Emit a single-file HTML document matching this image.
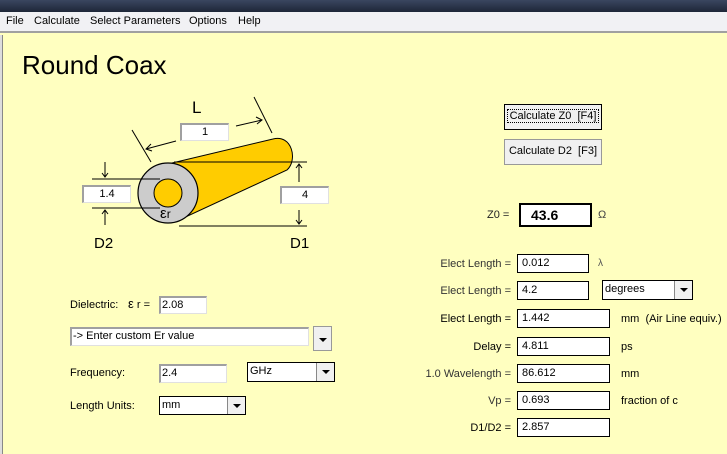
<!DOCTYPE html>
<html><head><style>
*{margin:0;padding:0;box-sizing:border-box}
body{width:727px;height:454px;overflow:hidden;background:#ffffc0;font-family:"Liberation Sans",sans-serif;font-size:11px;color:#000;position:relative}
.a{position:absolute;white-space:nowrap}
.tb{left:0;top:0;width:727px;height:12px;background:linear-gradient(#3a4660,#1e2638)}
.mb{left:0;top:12px;width:727px;height:21px;background:#f1f1f4;border-bottom:2px solid #a0a0a0}
.mb span{position:absolute;top:3px;font-size:11px;white-space:nowrap}
.box{position:absolute;background:#fff;border:1px solid #000;padding:1px 4px;font-size:11px;line-height:14px}
.sunk{position:absolute;background:#fff;border-top:2px solid #a0a0a0;border-left:2px solid #a0a0a0;border-bottom:1px solid #e0e0e0;border-right:1px solid #e0e0e0;font-size:11px;text-align:center;line-height:15px}
.cmb{position:absolute;background:#fff;border:1px solid #000;font-size:11px;padding:1px 2px;line-height:15px}
.dd{position:absolute;right:0;top:0;width:18px;height:100%;background:#f0f0f0;border-left:1px solid #888}
.dd:after{content:"";position:absolute;left:5px;top:50%;margin-top:-2px;border-left:4px solid transparent;border-right:4px solid transparent;border-top:4px solid #000}
.btn{position:absolute;background:#f0f0f0;border:1px solid #999;font-size:11px;text-align:center;line-height:23px;white-space:nowrap}
.lbl{position:absolute;font-size:11px;text-align:right;width:95px;color:#333;white-space:nowrap}
</style></head><body>
<div class="a tb"></div>
<div class="a mb"><span style="left:6px">File</span><span style="left:34px">Calculate</span><span style="left:90px">Select Parameters</span><span style="left:189px">Options</span><span style="left:238px">Help</span></div>
<div class="a" style="left:0;top:35px;width:3px;height:419px;background:#ddd;border-right:1px solid #888"></div>
<div class="a" style="left:22px;top:50px;font-size:26px">Round Coax</div>

<svg class="a" style="left:0;top:0" width="727" height="454">
<path d="M172,163 L273,139 C292,134 298,160 287,170 L179,220 Z" fill="#ffcc00" stroke="#000" stroke-width="1"/>
<circle cx="168" cy="193" r="30" fill="#cccccc" stroke="#000" stroke-width="1.2"/>
<circle cx="168" cy="193" r="14" fill="#ffcc00" stroke="#000" stroke-width="1"/>
<g stroke="#000" stroke-width="1" fill="none">
<line x1="174" y1="162" x2="307" y2="162"/><line x1="179" y1="226" x2="307" y2="226"/>
<line x1="92" y1="179" x2="160" y2="179"/><line x1="92" y1="208" x2="160" y2="208"/>
<line x1="132" y1="130" x2="151" y2="162"/><line x1="254" y1="97" x2="272" y2="133"/>
<line x1="176" y1="141" x2="146" y2="149"/><path d="M151,144 L146,149 L152,151"/>
<line x1="236" y1="126" x2="262" y2="120"/><path d="M256,117 L262,120 L257,124"/>
<line x1="299" y1="182" x2="299" y2="164"/><path d="M296,168 L299,164 L302,168"/>
<line x1="299" y1="210" x2="299" y2="224"/><path d="M296,220 L299,224 L302,220"/>
<line x1="105" y1="162" x2="105" y2="177"/><path d="M102,173 L105,177 L108,173"/>
<line x1="105" y1="225" x2="105" y2="210"/><path d="M102,214 L105,210 L108,214"/>
</g>
</svg>
<div class="a" style="left:192px;top:98px;font-size:17px">L</div>
<div class="sunk" style="left:180px;top:123px;width:49px;height:18px">1</div>
<div class="sunk" style="left:82px;top:185px;width:49px;height:18px">1.4</div>
<div class="sunk" style="left:280px;top:186px;width:49px;height:18px">4</div>
<div class="a" style="left:160px;top:205px;font-size:15px">ε<span style="font-size:12px">r</span></div>
<div class="a" style="left:94px;top:235px;font-size:15px">D2</div>
<div class="a" style="left:290px;top:235px;font-size:15px">D1</div>

<div class="a" style="left:70px;top:299px;font-size:11px">Dielectric:</div>
<div class="a" style="left:128px;top:296px;font-size:13px">ε<span style="font-size:11px"> r =</span></div>
<div class="sunk" style="left:159px;top:296px;width:48px;height:18px;text-align:left;padding-left:1px">2.08</div>
<div class="sunk" style="left:70px;top:327px;width:239px;height:19px;text-align:left;font-size:11px;padding-left:1px">-&gt; Enter custom Er value</div>
<div class="btn" style="left:313px;top:326px;width:19px;height:25px"><span style="position:absolute;left:5px;top:11px;border-left:4px solid transparent;border-right:4px solid transparent;border-top:4px solid #000"></span></div>
<div class="a" style="left:70px;top:367px;font-size:11px">Frequency:</div>
<div class="sunk" style="left:159px;top:364px;width:68px;height:19px;text-align:left;padding-left:1px">2.4</div>
<div class="cmb" style="left:247px;top:362px;width:88px;height:20px">GHz<div class="dd"></div></div>
<div class="a" style="left:70px;top:400px;font-size:11px">Length Units:</div>
<div class="cmb" style="left:159px;top:396px;width:87px;height:19px">mm<div class="dd"></div></div>

<div class="btn" style="left:504px;top:104px;width:98px;height:26px;border:1px solid #000;line-height:22px"><span style="border:1px dotted #000;padding:0 2px">Calculate Z0&nbsp; [F4]</span></div>
<div class="btn" style="left:504px;top:139px;width:98px;height:26px">Calculate D2&nbsp; [F3]</div>

<div class="a" style="left:487px;top:209px;font-size:11px;color:#222">Z0 =</div>
<div class="box" style="left:519px;top:203px;width:73px;height:24px;border:2px solid #000;font-weight:bold;font-size:14px;padding-left:10px;line-height:18px">43.6</div>
<div class="a" style="left:598px;top:209px;font-size:11px;color:#444">Ω</div>

<div class="lbl" style="left:416px;top:258px">Elect Length =</div>
<div class="box" style="left:517px;top:254px;width:72px;height:19px">0.012</div>
<div class="a" style="left:598px;top:258px;font-size:10px;color:#555">λ</div>
<div class="lbl" style="left:416px;top:285px">Elect Length =</div>
<div class="box" style="left:517px;top:281px;width:72px;height:19px">4.2</div>
<div class="cmb" style="left:602px;top:280px;width:91px;height:20px">degrees<div class="dd"></div></div>
<div class="lbl" style="left:416px;top:313px;color:#000">Elect Length =</div>
<div class="box" style="left:517px;top:309px;width:93px;height:19px">1.442</div>
<div class="a" style="left:621px;top:313px;font-size:11px">mm&nbsp; (Air Line equiv.)</div>
<div class="lbl" style="left:416px;top:341px;color:#000">Delay =</div>
<div class="box" style="left:517px;top:337px;width:93px;height:19px">4.811</div>
<div class="a" style="left:621px;top:341px;font-size:11px">ps</div>
<div class="lbl" style="left:416px;top:368px">1.0 Wavelength =</div>
<div class="box" style="left:517px;top:364px;width:93px;height:19px">86.612</div>
<div class="a" style="left:621px;top:368px;font-size:11px">mm</div>
<div class="lbl" style="left:416px;top:395px">Vp =</div>
<div class="box" style="left:517px;top:391px;width:93px;height:19px">0.693</div>
<div class="a" style="left:621px;top:395px;font-size:11px">fraction of c</div>
<div class="lbl" style="left:416px;top:422px;color:#000">D1/D2 =</div>
<div class="box" style="left:517px;top:418px;width:93px;height:19px">2.857</div>
</body></html>
